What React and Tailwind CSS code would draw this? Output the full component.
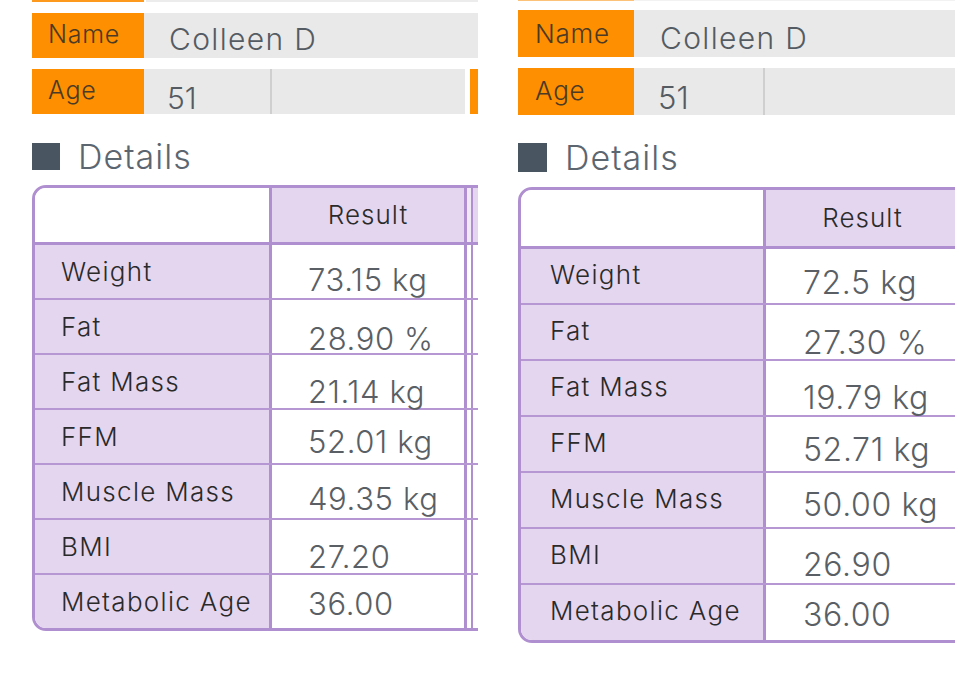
import React from "react";

const FONT = { fontFamily: "Inter, 'Noto Sans', sans-serif" };

const leftRows = [
  ["Weight", "73.15 kg", "pt-[19px]"],
  ["Fat", "28.90 %", "pt-[23px]"],
  ["Fat Mass", "21.14 kg", "pt-[21px]"],
  ["FFM", "52.01 kg", "pt-[16px]"],
  ["Muscle Mass", "49.35 kg", "pt-[18px]"],
  ["BMI", "27.20", "pt-[21px]"],
  ["Metabolic Age", "36.00", "pt-[13px]"],
];

const rightRows = [
  ["Weight", "72.5 kg", "pt-[18px]"],
  ["Fat", "27.30 %", "pt-[22px]"],
  ["Fat Mass", "19.79 kg", "pt-[21px]"],
  ["FFM", "52.71 kg", "pt-[17px]"],
  ["Muscle Mass", "50.00 kg", "pt-[16px]"],
  ["BMI", "26.90", "pt-[20px]"],
  ["Metabolic Age", "36.00", "pt-[14px]"],
];

function LeftPanel() {
  return (
    <div className="w-[446px] shrink-0 overflow-hidden">
      {/* remnant of previous row */}
      <div className="flex h-[2px]">
        <div className="w-[112px] bg-[#fd9a1e]" />
        <div className="ml-[2px] flex-1 bg-[#ececec]" />
      </div>
      {/* Name */}
      <div className="mt-[11px] flex h-[45px]">
        <div className="w-[112px] bg-[#fd8f00] pl-[16px] pt-[9px]">
          <span className="block text-[25px] font-[350] leading-none tracking-[0.03em] text-[#4b3a26]">Name</span>
        </div>
        <div className="flex-1 bg-[#e9e9e9] pl-[25px] pt-[11px]">
          <span className="block text-[30px] font-light leading-none tracking-[0.045em] text-[#555b63]">Colleen D</span>
        </div>
      </div>
      {/* Age */}
      <div className="mt-[11px] flex h-[45px]">
        <div className="w-[112px] bg-[#fd8f00] pl-[16px] pt-[9px]">
          <span className="block text-[25px] font-[350] leading-none tracking-[0.03em] text-[#4b3a26]">Age</span>
        </div>
        <div className="w-[126px] bg-[#e9e9e9] pl-[23px] pt-[14px]">
          <span className="block text-[30px] font-light leading-none text-[#555b63]">51</span>
        </div>
        <div className="w-[2px] bg-[#cfcfcf]" />
        <div className="w-[193px] bg-[#e9e9e9]" />
        <div className="w-[5px]" />
        <div className="flex-1 bg-[#fd8f00]" />
      </div>
      {/* Details */}
      <div className="mt-[29px] flex h-[27px] items-center gap-[18px]">
        <div className="h-[27px] w-[28px] bg-[#4a5562]" />
        <span className="text-[34px] font-light leading-none tracking-[0.03em] text-[#5c6670]">Details</span>
      </div>
      {/* Table */}
      <div className="mt-[15px] w-[600px] overflow-hidden rounded-l-[14px] border-[3px] border-[#b08fd0]">
        <div className="flex h-[57px] border-b-[3px] border-[#b08fd0]">
          <div className="w-[234px] bg-white" />
          <div className="flex w-[195px] items-center justify-center border-l-[3px] border-[#b08fd0] bg-[#e4d6ef]">
            <span className="text-[26px] font-[350] leading-none tracking-[0.04em] text-[#2b2b2b]">Result</span>
          </div>
          <div className="w-[7px] border-l-[3px] border-[#b08fd0] bg-[#f1eaf6]" />
          <div className="flex-1 border-l-2 border-[#b08fd0] bg-[#e4d6ef]" />
        </div>
        {leftRows.map(([label, value, pt], i) => (
          <div
            key={label}
            className={
              i < leftRows.length - 1
                ? "flex h-[55px] border-b-2 border-[#b796d4]"
                : "flex h-[53px]"
            }
          >
            <div className="w-[234px] bg-[#e4d6ef] pl-[26px] pt-[14px]">
              <span className="block whitespace-nowrap text-[26px] font-[350] leading-none tracking-[0.05em] text-[#2a2a2a]">
                {label}
              </span>
            </div>
            <div className={"w-[195px] border-l-[3px] border-[#b08fd0] bg-white pl-[36px] " + pt}>
              <span className="block whitespace-nowrap text-[31px] font-light leading-none tracking-[0.02em] text-[#5a5f65]">
                {value}
              </span>
            </div>
            <div className="w-[7px] border-l-[3px] border-[#b08fd0] bg-white" />
            <div className="flex-1 border-l-2 border-[#b08fd0] bg-white" />
          </div>
        ))}
      </div>
    </div>
  );
}

function RightPanel() {
  return (
    <div className="w-[437px] shrink-0 overflow-hidden">
      <div className="flex h-[1px]">
        <div className="w-[116px] bg-[#fdc27a]" />
        <div className="flex-1 bg-[#f2f2f2]" />
      </div>
      {/* Name */}
      <div className="mt-[9px] flex h-[47px]">
        <div className="w-[116px] bg-[#fd8f00] pl-[17px] pt-[11px]">
          <span className="block text-[26px] font-[350] leading-none tracking-[0.03em] text-[#4b3a26]">Name</span>
        </div>
        <div className="flex-1 bg-[#e9e9e9] pl-[26px] pt-[13px]">
          <span className="block text-[30px] font-light leading-none tracking-[0.045em] text-[#555b63]">Colleen D</span>
        </div>
      </div>
      {/* Age */}
      <div className="mt-[11px] flex h-[47px]">
        <div className="w-[116px] bg-[#fd8f00] pl-[17px] pt-[10px]">
          <span className="block text-[26px] font-[350] leading-none tracking-[0.03em] text-[#4b3a26]">Age</span>
        </div>
        <div className="w-[129px] bg-[#e9e9e9] pl-[24px] pt-[14px]">
          <span className="block text-[31px] font-light leading-none text-[#555b63]">51</span>
        </div>
        <div className="w-[2px] bg-[#cfcfcf]" />
        <div className="flex-1 bg-[#e9e9e9]" />
      </div>
      {/* Details */}
      <div className="mt-[28px] flex h-[29px] items-center gap-[18px]">
        <div className="h-[29px] w-[29px] bg-[#4a5562]" />
        <span className="text-[34px] font-light leading-none tracking-[0.03em] text-[#5c6670]">Details</span>
      </div>
      {/* Table */}
      <div className="mt-[15px] w-[600px] overflow-hidden rounded-l-[14px] border-[3px] border-[#b08fd0]">
        <div className="flex h-[59px] border-b-[3px] border-[#b08fd0]">
          <div className="w-[242px] bg-white" />
          <div className="flex w-[196px] items-center justify-center border-l-[3px] border-[#b08fd0] bg-[#e4d6ef]">
            <span className="text-[26px] font-[350] leading-none tracking-[0.04em] text-[#2b2b2b]">Result</span>
          </div>
          <div className="flex-1 bg-[#e4d6ef]" />
        </div>
        {rightRows.map(([label, value, pt], i) => (
          <div
            key={label}
            className={
              i < rightRows.length - 1
                ? "flex h-[56px] border-b-2 border-[#b796d4]"
                : "flex h-[55px]"
            }
          >
            <div className="w-[242px] bg-[#e4d6ef] pl-[29px] pt-[13px]">
              <span className="block whitespace-nowrap text-[26px] font-[350] leading-none tracking-[0.05em] text-[#2a2a2a]">
                {label}
              </span>
            </div>
            <div className={"flex-1 border-l-[3px] border-[#b08fd0] bg-white pl-[37px] " + pt}>
              <span className="block whitespace-nowrap text-[32px] font-light leading-none tracking-[0.02em] text-[#5a5f65]">
                {value}
              </span>
            </div>
          </div>
        ))}
      </div>
    </div>
  );
}

export default function App() {
  return (
    <div className="h-[683px] w-[960px] overflow-hidden bg-white" style={FONT}>
      <div className="flex gap-[40px] pl-[32px]">
        <LeftPanel />
        <RightPanel />
      </div>
    </div>
  );
}
